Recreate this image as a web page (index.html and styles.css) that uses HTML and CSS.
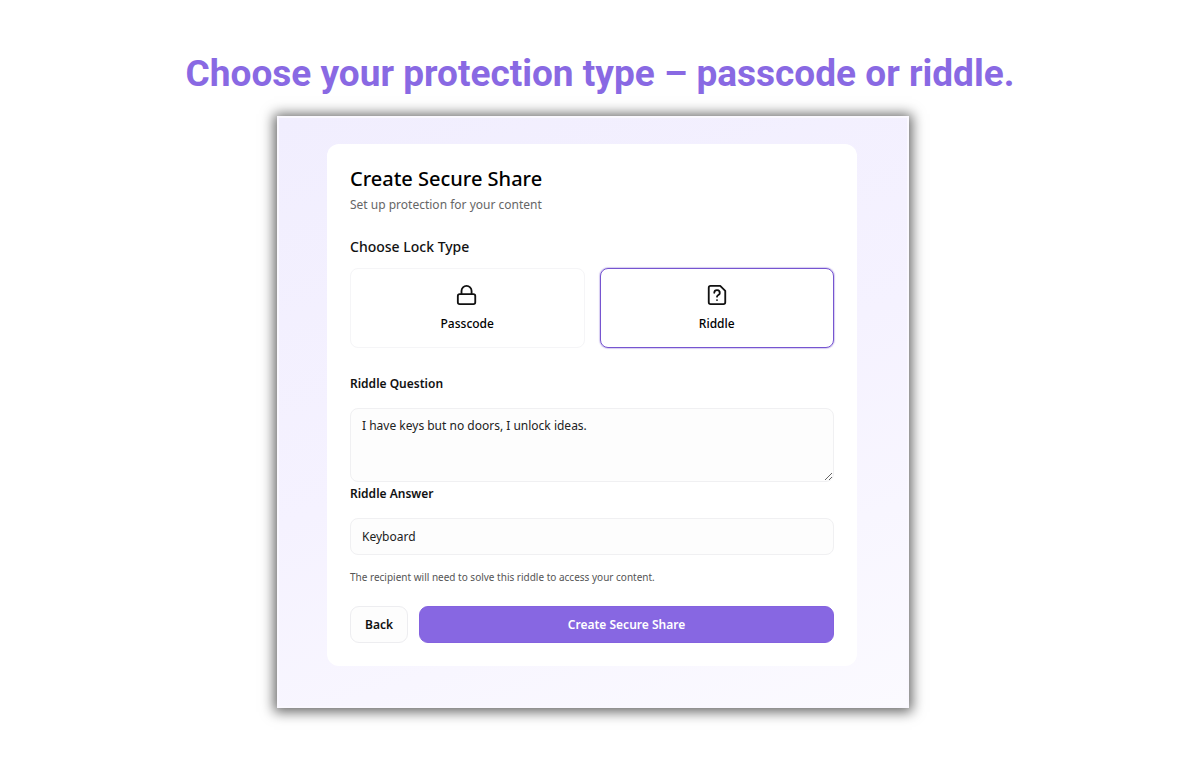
FILE: index.html
```html
<!DOCTYPE html>
<html lang="en">
<head>
<meta charset="UTF-8" />
<meta name="viewport" content="width=device-width, initial-scale=1.0" />
<title>Create Secure Share</title>
<link rel="stylesheet" href="styles.css">
</head>
<body>
<h1 class="headline">Choose your protection type – passcode or riddle.</h1>

<main class="stage">
  <div class="panel">
    <form class="card">
      <h2 class="card-title">Create Secure Share</h2>
      <p class="subtitle">Set up protection for your content</p>

      <h3 class="section-title">Choose Lock Type</h3>
      <div class="lock-types">
        <button type="button" class="lock-type" aria-pressed="false">
          <svg class="icon" viewBox="0 0 24 24">
            <rect x="2" y="11" width="19" height="11" rx="2" />
            <path d="M6 11V7.500a5.500 5.500 0 0 1 11 0V11" />
          </svg>
          Passcode
        </button>
        <button type="button" class="lock-type selected" aria-pressed="true">
          <svg class="icon" viewBox="0 0 24 24">
            <path d="M15.500 2H5a2 2 0 0 0-2 2v16a2 2 0 0 0 2 2h14a2 2 0 0 0 2-2V7.500z" />
            <path d="M9 9.500a3 3 0 0 1 6 0.500c0 2-3 2-3 3.800" />
            <path d="M12 17.500h.01" />
          </svg>
          Riddle
        </button>
      </div>

      <label class="field-label" for="question">Riddle Question</label>
      <textarea class="field question" id="question">I have keys but no doors, I unlock ideas.</textarea>

      <label class="field-label" for="answer">Riddle Answer</label>
      <input class="field answer" id="answer" type="text" value="Keyboard">

      <p class="hint">The recipient will need to solve this riddle to access your content.</p>

      <div class="actions">
        <button type="button" class="btn back">Back</button>
        <button type="submit" class="btn create">Create Secure Share</button>
      </div>
    </form>
  </div>
</main>
</body>
</html>
```

FILE: styles.css
```css
* {
  box-sizing: border-box;
}
body {
  margin: 0;
  padding: 50px 20px;
  background: #fff;
  color: #111;
  font-family: "Noto Sans", "Open Sans", sans-serif;
  font-size: 12px;
}
.headline {
  margin: 0 0 18px;
  color: #8969e3;
  font-family: Roboto, sans-serif;
  font-size: 37px;
  font-weight: 700;
  line-height: 48px;
  text-align: center;
}
.stage {
  display: flex;
  justify-content: center;
  padding-right: 14px;
}
.panel {
  width: 100%;
  max-width: 632px;
  padding: 26px 50px 40px 48px;
  border: 2px solid #faf8ff;
  background: linear-gradient(160deg, #f1eefe 0%, #f5f2ff 50%, #fbfaff 100%);
  box-shadow: 0 1px 12px 3px rgba(0, 0, 0, 0.6);
}
.card {
  display: flex;
  flex-direction: column;
  padding: 22px 23px 23px;
  border-radius: 12px;
  background: #fff;
}
.card-title {
  margin: 0;
  color: #000;
  font-size: 20px;
  font-weight: 500;
  line-height: 26px;
}
.subtitle {
  margin: 0;
  color: #666;
  font-size: 12px;
  line-height: 26px;
}
.section-title {
  margin: 19px 0 11px;
  font-size: 14px;
  font-weight: 500;
  line-height: 20px;
}
.lock-types {
  display: grid;
  grid-template-columns: 1fr 1fr;
  gap: 15px;
  margin-bottom: 24px;
}
.lock-type {
  display: flex;
  flex-direction: column;
  align-items: center;
  justify-content: center;
  gap: 9px;
  height: 80px;
  padding: 1px 0 0;
  border: 1px solid #f5f5f7;
  border-radius: 8px;
  background: #fff;
  color: #000;
  font-family: inherit;
  font-size: 12px;
  font-weight: 500;
  line-height: 18px;
  cursor: pointer;
}
.lock-type.selected {
  border-color: #7655d0;
  box-shadow: 0 0 1px 1px rgba(118, 85, 208, 0.3);
}
.icon {
  width: 22px;
  height: 22px;
  fill: none;
  stroke: #111;
  stroke-width: 2;
  stroke-linecap: round;
  stroke-linejoin: round;
}
.field-label {
  font-size: 12px;
  font-weight: 600;
  line-height: 24px;
}
.field {
  display: block;
  width: 100%;
  border: 1px solid #f0f0f2;
  border-radius: 8px;
  background: #fdfdfd;
  color: #222;
  font-family: inherit;
  font-size: 12px;
  line-height: 18px;
}
.question {
  height: 74px;
  margin-top: 12px;
  padding: 8px 11px;
  resize: vertical;
}
.answer {
  height: 37px;
  margin-top: 12px;
  padding: 0 11px;
}
.hint {
  margin: 13px 0 20px;
  color: #555;
  font-size: 10px;
  line-height: 18px;
}
.actions {
  display: flex;
  gap: 11px;
}
.btn {
  height: 37px;
  border-radius: 9px;
  font-family: inherit;
  font-size: 12px;
  font-weight: 600;
  cursor: pointer;
}
.back {
  width: 58px;
  padding: 0;
  border: 1px solid #ededf0;
  background: #fdfdfd;
  color: #111;
}
.create {
  flex: 1;
  border: 1px solid #8462df;
  background: #8767e2;
  color: #fff;
}
```
